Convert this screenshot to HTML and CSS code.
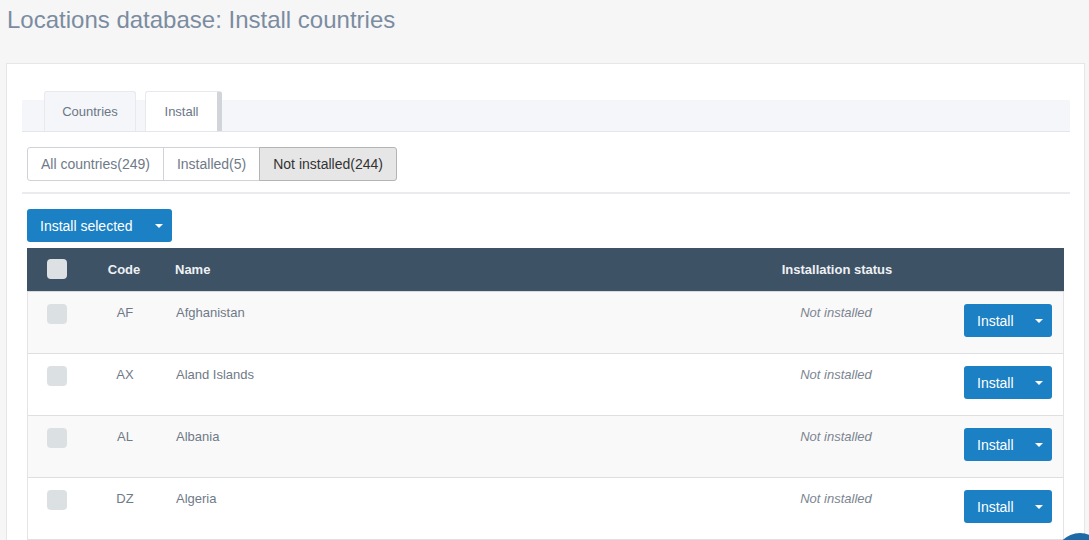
FILE: index.html
```html
<!DOCTYPE html>
<html lang="en">
<head>
    <meta charset="UTF-8">
    <meta name="viewport" content="width=device-width, initial-scale=1.0">
    <title>Locations database: Install countries</title>
    <link rel="stylesheet" href="styles.css">
</head>
<body>
    <h1 class="page-title">Locations database: Install countries</h1>

    <div class="panel">
        <div class="tabs">
            <a class="tab">Countries</a>
            <a class="tab active">Install</a>
        </div>

        <div class="filter-group">
            <button class="filter-btn">All countries(249)</button>
            <button class="filter-btn">Installed(5)</button>
            <button class="filter-btn active">Not installed(244)</button>
        </div>
        <div class="separator"></div>

        <div class="split-btn bulk-btn">
            <span class="split-label">Install selected</span>
            <span class="caret"></span>
        </div>

        <div class="table">
            <div class="row head">
                <div class="cell check"><span class="checkbox"></span></div>
                <div class="cell code">Code</div>
                <div class="cell name">Name</div>
                <div class="cell status">Installation status</div>
                <div class="cell action"></div>
            </div>
            <div class="row">
                <div class="cell check"><span class="checkbox"></span></div>
                <div class="cell code">AF</div>
                <div class="cell name">Afghanistan</div>
                <div class="cell status">Not installed</div>
                <div class="cell action"><div class="split-btn row-btn"><span class="split-label">Install</span><span class="caret"></span></div></div>
            </div>
            <div class="row">
                <div class="cell check"><span class="checkbox"></span></div>
                <div class="cell code">AX</div>
                <div class="cell name">Aland Islands</div>
                <div class="cell status">Not installed</div>
                <div class="cell action"><div class="split-btn row-btn"><span class="split-label">Install</span><span class="caret"></span></div></div>
            </div>
            <div class="row">
                <div class="cell check"><span class="checkbox"></span></div>
                <div class="cell code">AL</div>
                <div class="cell name">Albania</div>
                <div class="cell status">Not installed</div>
                <div class="cell action"><div class="split-btn row-btn"><span class="split-label">Install</span><span class="caret"></span></div></div>
            </div>
            <div class="row">
                <div class="cell check"><span class="checkbox"></span></div>
                <div class="cell code">DZ</div>
                <div class="cell name">Algeria</div>
                <div class="cell status">Not installed</div>
                <div class="cell action"><div class="split-btn row-btn"><span class="split-label">Install</span><span class="caret"></span></div></div>
            </div>
        </div>
    </div>

    <div class="float-btn"></div>
</body>
</html>
```

FILE: styles.css
```css
body {
    margin: 0;
    background-color: #f6f6f6;
    font-family: 'Liberation Sans', Arial, sans-serif;
    font-size: 13px;
    color: #6f7a88;
    overflow: hidden;
}
.page-title {
    margin: 0;
    padding: 6px 0 0 7px;
    height: 56px;
    box-sizing: border-box;
    font-size: 24px;
    font-weight: normal;
    color: #7b8ca1;
}
.panel {
    margin: 7px 4px 0 6px;
    background: #fff;
    border: 1px solid #e6e6e6;
    padding: 27px 14px 0 15px;
    height: 600px;
}
.tabs {
    display: flex;
    align-items: flex-end;
    height: 40px;
    padding-left: 22px;
    gap: 9px;
    background: linear-gradient(to bottom, transparent 9px, #f5f6fa 9px);
    border-bottom: 1px solid #e4e6eb;
}
.tab {
    height: 40px;
    box-sizing: border-box;
    display: flex;
    align-items: center;
    justify-content: center;
    color: #6b7786;
    border: 1px solid #e7e9ee;
    border-bottom: none;
    border-radius: 3px 3px 0 0;
    background: #f5f6fa;
}
.tab:first-child {
    width: 92px;
}
.tab.active {
    width: 77px;
    background: #fff;
    border-right: 5px solid #d1d4d8;
}
.filter-group {
    display: flex;
    margin: 15px 0 0 5px;
}
.filter-btn {
    height: 34px;
    padding: 0 13px;
    font-family: inherit;
    font-size: 14px;
    color: #6f7a88;
    background: #fff;
    border: 1px solid #cfd2d6;
    margin-left: -1px;
}
.filter-btn:first-child {
    border-radius: 3px 0 0 3px;
    margin-left: 0;
}
.filter-btn:last-child {
    border-radius: 0 3px 3px 0;
}
.filter-btn.active {
    background: #e6e6e6;
    border-color: #b4b4b4;
    color: #333;
}
.separator {
    height: 2px;
    background: #e9ebef;
    margin-top: 11px;
}
.split-btn {
    display: flex;
    align-items: center;
    background: #1b80c4;
    color: #fff;
    border-radius: 3px;
    font-size: 14px;
    box-sizing: border-box;
}
.bulk-btn {
    width: 145px;
    height: 33px;
    margin: 15px 0 0 5px;
    padding-left: 13px;
}
.split-label {
    flex: 1;
}
.caret {
    width: 0;
    height: 0;
    border-left: 4px solid transparent;
    border-right: 4px solid transparent;
    border-top: 4px solid #fff;
    margin-right: 9px;
}
.table {
    margin: 6px 6px 0 5px;
    border-left: 1px solid #e3e4e6;
    border-right: 1px solid #e3e4e6;
}
.row {
    display: grid;
    grid-template-columns: 62px 70px 1fr 214px 120px;
    height: 62px;
    box-sizing: border-box;
    border-bottom: 1px solid #dedfe1;
    background: #fff;
}
.row:nth-child(even) {
    background: #f9f9f9;
}
.row.head {
    height: 44px;
    background: #3e5266;
    color: #eef1f4;
    font-weight: bold;
    border-bottom: 1px solid #d7dadd;
    margin: 0 -1px;
}
.cell {
    padding-top: 13px;
}
.head .cell {
    padding-top: 14px;
}
.check {
    padding: 12px 0 0 19px;
}
.head .check {
    padding: 11px 0 0 20px;
}
.checkbox {
    display: block;
    width: 20px;
    height: 20px;
    border-radius: 4px;
    background: #dbe0e3;
}
.head .checkbox {
    background: #dde1e4;
}
.code {
    text-align: center;
}
.name {
    padding-left: 16px;
}
.status {
    text-align: center;
    font-style: italic;
    color: #7c8591;
}
.head .status {
    font-style: normal;
    color: #eef1f4;
}
.action {
    display: flex;
    justify-content: flex-end;
    padding: 12px 11px 0 0;
}
.row-btn {
    width: 88px;
    height: 33px;
    padding-left: 13px;
}
.float-btn {
    position: fixed;
    left: 1055px;
    top: 533px;
    width: 50px;
    height: 50px;
    border-radius: 50%;
    background: #1d6aa6;
}
```
